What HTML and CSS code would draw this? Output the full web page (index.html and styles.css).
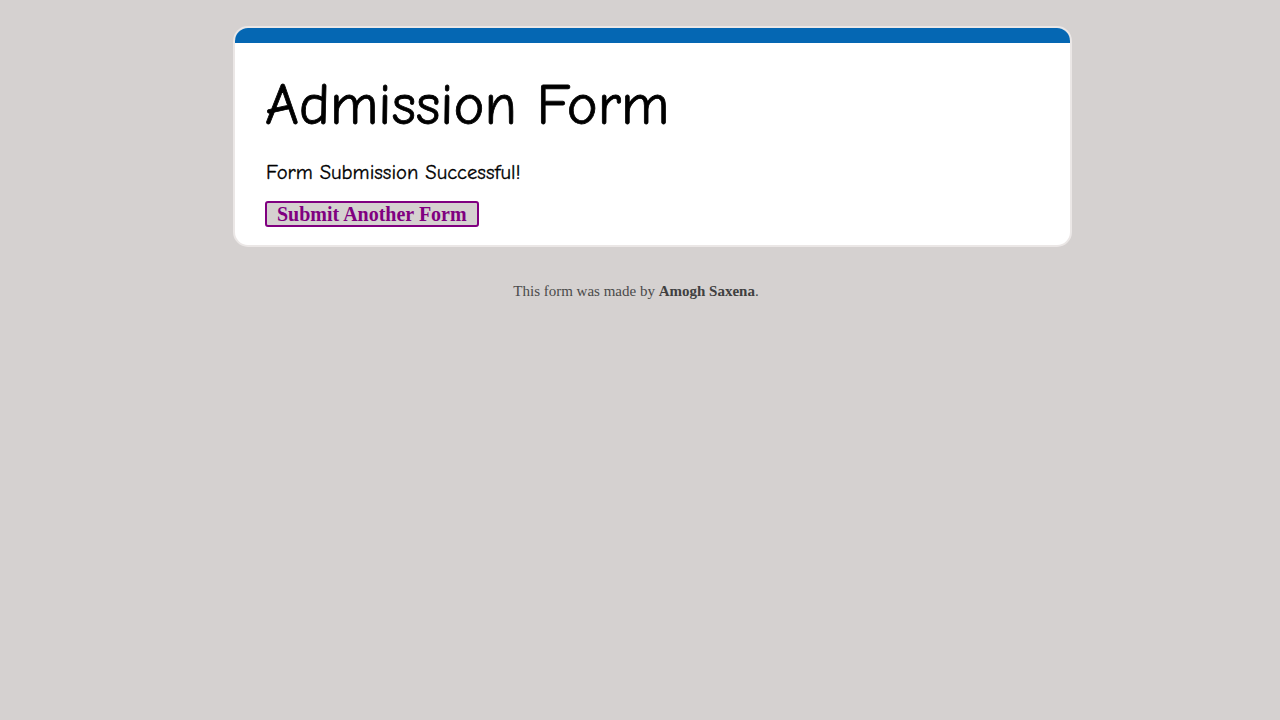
FILE: index.html
```html
<!DOCTYPE html>
<html>
<head>
<meta charset="utf-8">
<title>Admission Form</title>
<link rel="stylesheet" href="styles.css">
</head>
<body>
<div class="page">
  <div class="card">
    <div class="card-bar"></div>
    <div class="card-body">
      <h1 class="title">Admission Form</h1>
      <p class="message">Form Submission Successful!</p>
      <button class="again" type="button">Submit Another Form</button>
    </div>
  </div>
</div>
<p class="footer">This form was made by <b>Amogh Saxena</b>.</p>
</body>
</html>
```

FILE: styles.css
```css
html, body {
  margin: 0;
  padding: 0;
  background: #d5d1d0;
}
.page {
  padding: 26px 0 0 25px;
}
.card {
  width: 835px;
  margin: 0 auto;
  background: #ffffff;
  border: 2px solid #ebe7e6;
  border-radius: 15px;
  overflow: hidden;
}
.card-bar {
  height: 15px;
  background: #0567b3;
}
.card-body {
  padding: 22px 30px 18px 30px;
}
.title {
  margin: 0;
  font-family: "Comic Sans MS", "Comic Neue", "Open Sans", sans-serif;
  font-weight: normal;
  font-size: 58.5px;
  line-height: 80px;
  color: #000;
  -webkit-text-stroke: 0.8px #000;
}
.message {
  margin: 14px 0 0 1px;
  font-family: "Comic Sans MS", "Comic Neue", "Open Sans", sans-serif;
  font-size: 20.6px;
  line-height: 26px;
  color: #000;
  -webkit-text-stroke: 0.3px #000;
}
.again {
  display: block;
  margin: 16px 0 0 0;
  padding: 0 10px;
  height: 26px;
  background: #d5d1d0;
  border: 2px solid #800080;
  border-radius: 3px;
  color: #800080;
  font-family: "Liberation Serif", "Times New Roman", serif;
  font-weight: bold;
  font-size: 20px;
  line-height: 20px;
}
.footer {
  margin: 36px 0 0 0;
  padding-right: 8px;
  text-align: center;
  font-family: "Liberation Serif", "Times New Roman", serif;
  font-size: 15px;
  color: #4a4a4a;
}
.footer b {
  color: #404040;
}
```
